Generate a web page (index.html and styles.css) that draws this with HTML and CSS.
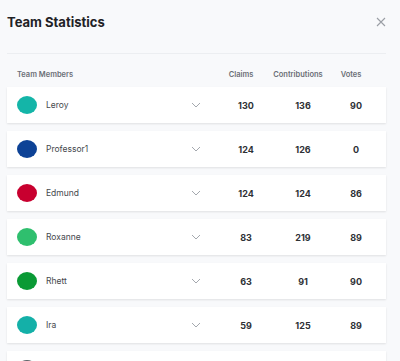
FILE: index.html
```html
<!DOCTYPE html>
<html>
<head>
<meta charset="utf-8">
<link rel="stylesheet" href="styles.css">
</head>
<body>
<div class="modal">
  <div class="head">
    <h1 class="title">Team Statistics</h1>
    <svg class="close" width="10" height="10" viewBox="0 0 10 10"><path d="M1 1L9 9M9 1L1 9" stroke="#9a9ea5" stroke-width="1.1" fill="none"/></svg>
  </div>
  <div class="divider"></div>
  <div class="cols">
    <span class="c-name">Team Members</span>
    <span class="col1">Claims</span>
    <span class="col2">Contributions</span>
    <span class="col3">Votes</span>
  </div>
  <div class="list">
    <div class="row"><span class="avatar" style="background:#14b5a8"></span><span class="name">Leroy</span><svg class="chev" width="10" height="6" viewBox="0 0 10 6"><path d="M1 1L5 5L9 1" stroke="#a4a8ae" stroke-width="1" fill="none"/></svg><span class="num col1">130</span><span class="num col2">136</span><span class="num col3">90</span></div>
    <div class="row"><span class="avatar" style="background:#0d4296"></span><span class="name">Professor1</span><svg class="chev" width="10" height="6" viewBox="0 0 10 6"><path d="M1 1L5 5L9 1" stroke="#a4a8ae" stroke-width="1" fill="none"/></svg><span class="num col1">124</span><span class="num col2">126</span><span class="num col3">0</span></div>
    <div class="row"><span class="avatar" style="background:#c8002f"></span><span class="name">Edmund</span><svg class="chev" width="10" height="6" viewBox="0 0 10 6"><path d="M1 1L5 5L9 1" stroke="#a4a8ae" stroke-width="1" fill="none"/></svg><span class="num col1">124</span><span class="num col2">124</span><span class="num col3">86</span></div>
    <div class="row"><span class="avatar" style="background:#2fbf6e"></span><span class="name">Roxanne</span><svg class="chev" width="10" height="6" viewBox="0 0 10 6"><path d="M1 1L5 5L9 1" stroke="#a4a8ae" stroke-width="1" fill="none"/></svg><span class="num col1">83</span><span class="num col2">219</span><span class="num col3">89</span></div>
    <div class="row"><span class="avatar" style="background:#0a9a35"></span><span class="name">Rhett</span><svg class="chev" width="10" height="6" viewBox="0 0 10 6"><path d="M1 1L5 5L9 1" stroke="#a4a8ae" stroke-width="1" fill="none"/></svg><span class="num col1">63</span><span class="num col2">91</span><span class="num col3">90</span></div>
    <div class="row"><span class="avatar" style="background:#14b0a8"></span><span class="name">Ira</span><svg class="chev" width="10" height="6" viewBox="0 0 10 6"><path d="M1 1L5 5L9 1" stroke="#a4a8ae" stroke-width="1" fill="none"/></svg><span class="num col1">59</span><span class="num col2">125</span><span class="num col3">89</span></div>
    <div class="row"><span class="avatar" style="background:#5c6468"></span></div>
  </div>
</div>
</body>
</html>
```

FILE: styles.css
```css
html, body {
  margin: 0;
  padding: 0;
  background: #f8f9fb;
  overflow: hidden;
}
body {
  width: 400px;
  height: 361px;
  font-family: Inter, "Open Sans", sans-serif;
}
.modal {
  padding: 0 14px 0 7px;
}
.head {
  display: flex;
  align-items: center;
  justify-content: space-between;
  height: 44px;
}
.title {
  margin: 0;
  font-size: 13px;
  font-weight: 700;
  color: #1f2226;
}
.divider {
  height: 1px;
  background: #eceef1;
  margin-top: 9px;
}
.cols {
  display: flex;
  align-items: center;
  height: 25px;
  padding: 8px 10px 0 10px;
  font-size: 7.5px;
  font-weight: 600;
  color: #6b6f76;
}
.c-name { width: 200px; }
.col1, .col2, .col3 { text-align: center; flex: none; }
.col1 { width: 58px; }
.col2 { width: 56px; }
.col3 { width: 50px; }
.list {
  display: flex;
  flex-direction: column;
  gap: 8px;
}
.row {
  display: flex;
  align-items: center;
  height: 36px;
  background: #fff;
  box-shadow: 0 1px 2px rgba(0,0,0,0.10);
  padding: 0 10px;
}
.avatar {
  width: 20px;
  height: 18px;
  border-radius: 50%;
  flex: none;
}
.name {
  width: 145px;
  margin-left: 9px;
  font-size: 8.5px;
  color: #45484d;
  flex: none;
}
.chev {
  flex: none;
  margin-right: 16px;
}
.num {
  font-size: 9px;
  font-weight: 700;
  color: #2e3136;
}
```
